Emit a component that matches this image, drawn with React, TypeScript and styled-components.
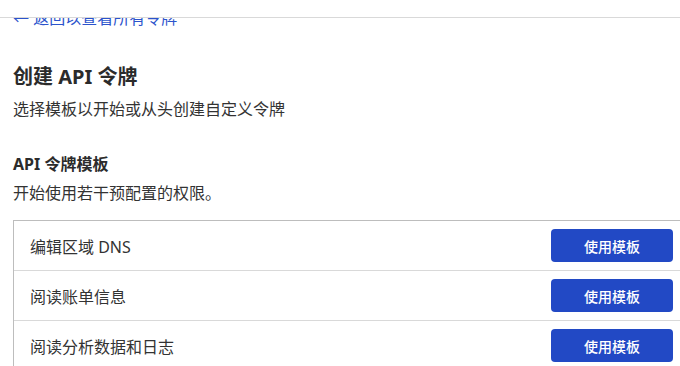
import React from "react";
import styled, { createGlobalStyle } from "styled-components";

const GlobalStyle = createGlobalStyle`
    html, body {
        margin: 0;
        padding: 0;
        background: #fff;
        overflow: hidden;
    }
    body {
        font-family: "Noto Sans", "Noto Sans CJK SC", sans-serif;
        color: #333;
    }
`;

const TopBar = styled.div`
    position: fixed;
    top: 0;
    left: 0;
    right: 0;
    height: 17px;
    background: #fff;
    border-bottom: 1px solid #d9d9d9;
    z-index: 10;
`;

const Page = styled.main`
    padding: 6px 0 0 13px;
    width: 677px;
`;

const BackLink = styled.a`
    display: block;
    font-size: 16px;
    line-height: 24px;
    color: #2c54cc;
    text-decoration: none;
`;

const Title = styled.h1`
    margin: 33px 0 0;
    font-size: 20px;
    line-height: 28px;
    font-weight: 700;
    color: #2b2b2b;
`;

const Lead = styled.p<{ $gap?: number }>`
    margin: ${(p) => p.$gap ?? 6}px 0 0;
    font-size: 16px;
    line-height: 24px;
    color: #333;
`;

const SectionTitle = styled.h2`
    margin: 31px 0 0;
    font-size: 16px;
    line-height: 24px;
    font-weight: 700;
    color: #2b2b2b;
`;

const TemplateList = styled.ul`
    list-style: none;
    margin: 15px 0 0;
    padding: 0;
    border: 1px solid #bdbdbd;
`;

const TemplateRow = styled.li`
    display: flex;
    align-items: center;
    justify-content: space-between;
    height: 49px;
    padding: 0 16px;
    font-size: 16px;
    color: #333;
    & + & {
        border-top: 1px solid #d9d9d9;
    }
`;

const UseButton = styled.button`
    width: 122px;
    height: 33px;
    border: none;
    border-radius: 4px;
    background: #2249c5;
    color: #fff;
    font-family: inherit;
    font-size: 14px;
    font-weight: 500;
    cursor: pointer;
`;

const templates = ["编辑区域 DNS", "阅读账单信息", "阅读分析数据和日志"];

const App = (): JSX.Element => {
    return (
        <>
            <GlobalStyle />
            <TopBar />
            <Page>
                <BackLink href="#">← 返回以查看所有令牌</BackLink>
                <Title>创建 API 令牌</Title>
                <Lead>选择模板以开始或从头创建自定义令牌</Lead>
                <SectionTitle>API 令牌模板</SectionTitle>
                <Lead $gap={5}>开始使用若干预配置的权限。</Lead>
                <TemplateList>
                    {templates.map((name) => (
                        <TemplateRow key={name}>
                            <span>{name}</span>
                            <UseButton>使用模板</UseButton>
                        </TemplateRow>
                    ))}
                </TemplateList>
            </Page>
        </>
    );
};

export default App;
